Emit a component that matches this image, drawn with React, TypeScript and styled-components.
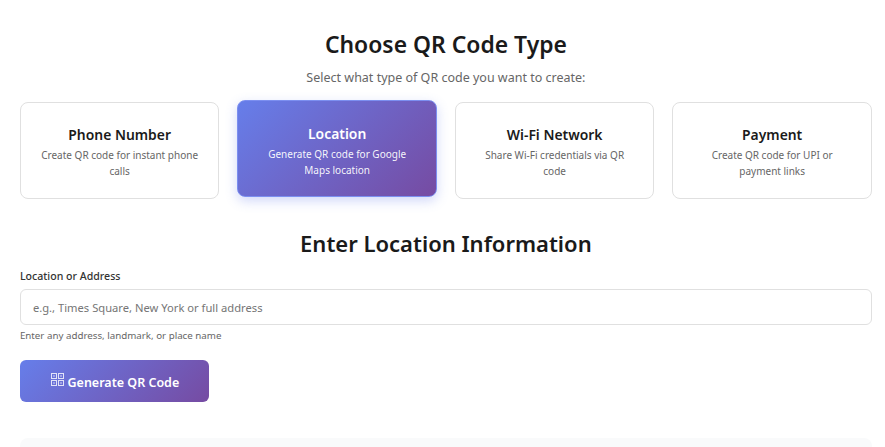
import React from "react";
import styled, { createGlobalStyle } from "styled-components";

const GlobalStyle = createGlobalStyle`
  * {
    box-sizing: border-box;
  }

  html,
  body {
    margin: 0;
    height: 100%;
    overflow: hidden;
    background: #fff;
    font-family: "Noto Sans", "Open Sans", sans-serif;
    color: #1a1a1a;
  }
`;

const StyledPage = styled.div`
  width: 852px;
  margin-left: 19.9px;
  padding-top: 28px;
`;

const StyledHeading = styled.h2`
  margin: 0;
  font-size: 22.9px;
  line-height: 33px;
  font-weight: 600;
  text-align: center;
  color: #1a1a1a;
`;

const StyledSubtitle = styled.p`
  margin: 7px 0 0;
  font-size: 12.5px;
  line-height: 20px;
  text-align: center;
  color: #666;
`;

const StyledCardGrid = styled.div`
  display: grid;
  grid-template-columns: repeat(4, 1fr);
  gap: 18px;
  margin-top: 14px;
`;

const StyledCard = styled.div<{ $active?: boolean }>`
  height: 97px;
  padding: ${(p) => (p.$active ? "5px" : "3px")} 18px 0;
  display: flex;
  flex-direction: column;
  align-items: center;
  justify-content: center;
  text-align: center;
  border-radius: 8px;
  border: 1px solid ${(p) => (p.$active ? "#7c8ff0" : "#e0e0e0")};
  background: ${(p) =>
    p.$active ? "linear-gradient(135deg, #667eea 0%, #764ba2 100%)" : "#fff"};
  color: ${(p) => (p.$active ? "#fff" : "#1a1a1a")};
  box-shadow: ${(p) =>
    p.$active ? "0 4px 12px rgba(102, 126, 234, 0.3)" : "none"};
  transform: ${(p) => (p.$active ? "translateY(-2px)" : "none")};
`;

const StyledCardTitle = styled.h3`
  margin: 0 0 2px;
  font-size: 13.9px;
  line-height: 20px;
  font-weight: 600;
`;

const StyledCardText = styled.p<{ $active?: boolean }>`
  margin: 0;
  font-size: 10px;
  line-height: 16px;
  color: ${(p) => (p.$active ? "rgba(255, 255, 255, 0.95)" : "#666")};
`;

const StyledFormHeading = styled(StyledHeading)`
  margin-top: 28px;
  font-size: 22px;
`;

const StyledLabel = styled.label`
  display: block;
  margin-top: 8px;
  font-size: 10.6px;
  line-height: 16px;
  font-weight: 500;
  color: #333;
`;

const StyledInput = styled.input`
  display: block;
  width: 100%;
  height: 36px;
  margin-top: 5px;
  padding: 0 12px;
  font-family: inherit;
  font-size: 11.2px;
  color: #333;
  background: #fff;
  border: 1px solid #e0e0e0;
  border-radius: 6px;
  outline: none;

  &::placeholder {
    color: #757575;
    opacity: 1;
  }
`;

const StyledHint = styled.small`
  display: block;
  margin-top: 3px;
  font-size: 9.75px;
  line-height: 15px;
  color: #666;
`;

const StyledButton = styled.button`
  display: flex;
  align-items: center;
  justify-content: center;
  gap: 4px;
  width: 189px;
  height: 42px;
  margin-top: 17px;
  padding: 2px 0 0;
  border: none;
  border-radius: 6px;
  font-family: inherit;
  font-size: 12.5px;
  font-weight: 600;
  color: #fff;
  background: linear-gradient(135deg, #667eea 0%, #764ba2 100%);
`;

const StyledIcon = styled.svg`
  width: 13px;
  height: 13px;
  margin: -5px 0 0 1px;
  flex: none;
`;

const StyledResultPanel = styled.div`
  height: 60px;
  margin-top: 36px;
  border-radius: 8px;
  background: #f9fafb;
`;

const qrTypes = [
  {
    title: "Phone Number",
    text: "Create QR code for instant phone calls",
  },
  {
    title: "Location",
    text: "Generate QR code for Google Maps location",
    active: true,
  },
  {
    title: "Wi-Fi Network",
    text: "Share Wi-Fi credentials via QR code",
  },
  {
    title: "Payment",
    text: "Create QR code for UPI or payment links",
  },
];

const iconCells = [
  [0, 0],
  [7, 0],
  [0, 7],
  [7, 7],
];

const QrIcon = () => (
  <StyledIcon viewBox="0 0 13 13" fill="none" stroke="#fff">
    {iconCells.map(([x, y]) => (
      <g key={`${x}-${y}`}>
        <rect x={x + 0.5} y={y + 0.5} width="5" height="5" strokeOpacity="0.8" />
        <rect
          x={x + 2}
          y={y + 2}
          width="2"
          height="2"
          fill="#fff"
          fillOpacity="0.35"
          stroke="none"
        />
      </g>
    ))}
  </StyledIcon>
);

const App = () => {
  return (
    <StyledPage>
      <GlobalStyle />
      <StyledHeading>Choose QR Code Type</StyledHeading>
      <StyledSubtitle>Select what type of QR code you want to create:</StyledSubtitle>

      <StyledCardGrid>
        {qrTypes.map((item) => (
          <StyledCard key={item.title} $active={item.active}>
            <StyledCardTitle>{item.title}</StyledCardTitle>
            <StyledCardText $active={item.active}>{item.text}</StyledCardText>
          </StyledCard>
        ))}
      </StyledCardGrid>

      <StyledFormHeading>Enter Location Information</StyledFormHeading>

      <StyledLabel htmlFor="location">Location or Address</StyledLabel>
      <StyledInput
        id="location"
        placeholder="e.g., Times Square, New York or full address"
      />
      <StyledHint>Enter any address, landmark, or place name</StyledHint>

      <StyledButton type="button">
        <QrIcon />
        Generate QR Code
      </StyledButton>

      <StyledResultPanel />
    </StyledPage>
  );
};

export default App;
